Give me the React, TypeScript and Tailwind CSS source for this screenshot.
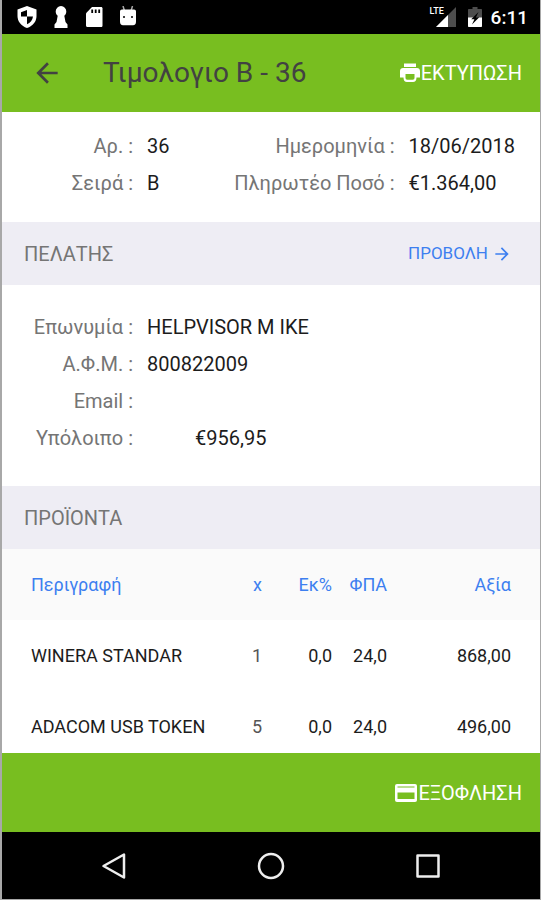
import { MdArrowBack, MdArrowForward } from "react-icons/md";

const products = [
  { name: "WINERA STANDAR", qty: "1", discount: "0,0", vat: "24,0", total: "868,00" },
  { name: "ADACOM USB TOKEN", qty: "5", discount: "0,0", vat: "24,0", total: "496,00" },
];

function PrintIcon() {
  return (
    <svg viewBox="0 0 20 20" className="size-5">
      <path d="M4 .5h12v3.500H4Z" fill="#fff" />
      <path d="M3 5h14c1.700 0 3 1.300 3 3v6.500h-3.500c0 3-1.300 4.500-3.500 4.500H7c-2.200 0-3.500-1.500-3.500-4.500H0V8c0-1.700 1.300-3 3-3Z" fill="#fff" />
      <path d="M5.500 11h9v3.500c0 1.500-.5 2.200-1.800 2.200H7.300c-1.300 0-1.800-.7-1.800-2.200Z" fill="#78be20" />
    </svg>
  );
}

function CardIcon() {
  return (
    <svg viewBox="0 0 22 18" className="h-[18px] w-[22px]">
      <rect width="22" height="18" rx="2" fill="#fff" />
      <path d="M2.500 2.500h17v1h-17ZM2.500 8.500h17v6.500h-17Z" fill="#78be20" />
    </svg>
  );
}

function StatusBar() {
  return (
    <div className="flex h-[34px] shrink-0 items-center justify-between bg-black pl-[15px] pr-3 text-white">
      <div className="flex items-center gap-[14px]">
        <svg viewBox="0 0 20 22" className="h-[22px] w-5">
          <path d="M10 0 19.500 3.600V10c0 5.500-3.600 10-9.500 12C4.200 20 .5 15.500.5 10V3.600Z" fill="#fff" />
          <path d="M10 4v6.500H4V6.300ZM10 10.500h6c-.4 3.800-2.700 6.400-6 7.800Z" fill="#000" />
        </svg>
        <svg viewBox="0 0 20 22" className="h-[22px] w-5">
          <path
            d="M10 0a5.500 5.500 0 0 1 5.300 5.600c0 1.900-.8 3.300-2 4.200l1.200 6.200 2 2.500V22h-13v-3.500l2-2.500 1.200-6.200c-1.200-.9-2-2.300-2-4.200A5.500 5.500 0 0 1 10 0Z"
            fill="#fff"
          />
        </svg>
        <svg viewBox="0 0 20 22" className="h-[22px] w-5">
          <path d="M7 1h9c1 0 1.500.6 1.500 1.500v17c0 1-.6 1.500-1.500 1.500H2.500C1.500 21 1 20.400 1 19.500V7.200Z" fill="#fff" />
          <path d="M7.200 3.500v3.500M10.700 3.500v3.500M14.200 3.500v3.500" stroke="#000" strokeWidth="1.800" />
        </svg>
        <svg viewBox="0 0 20 22" className="h-[22px] w-5">
          <path d="M4 0 5.500 5M13.500 0 12 5" stroke="#aaa" strokeWidth="1.500" />
          <path d="M3 3.500h12c1.200 0 2 .8 2 2v10c0 2.500-1 3.700-3 3.700H4c-2 0-3-1.200-3-3.700v-10c0-1.200.8-2 2-2Z" fill="#fff" />
          <circle cx="5" cy="11" r="1" fill="#000" />
          <circle cx="13" cy="11" r="1" fill="#000" />
        </svg>
      </div>

      <div className="flex items-center">
        <div className="relative h-5 w-[26px]">
          <svg viewBox="0 0 26 20" className="h-5 w-[26px]">
            <path d="M26 0v20H6Z" fill="#4d4d4d" />
            <path d="M18 8v12H6Z" fill="#fff" />
          </svg>
          <span className="absolute top-0 left-0 text-[9px] leading-[9px] font-medium">LTE</span>
        </div>
        <svg viewBox="0 0 14 20" className="ml-3 h-5 w-[14px]">
          <path d="M4.500 0h5v2H13c.6 0 1 .4 1 1v8H0V3c0-.6.400-1 1-1h3.500Z" fill="#4d4d4d" />
          <path d="M0 10.500h14V19c0 .6-.4 1-1 1H1c-.6 0-1-.4-1-1Z" fill="#fff" />
          <path d="M10.500 5 3.200 12.300h3.200L4 17.500l7.300-7.200H8Z" fill="#000" />
        </svg>
        <span className="ml-[9px] text-[19px] leading-none font-medium">6:11</span>
      </div>
    </div>
  );
}

function SystemNav() {
  return (
    <nav className="flex h-[67px] shrink-0 items-center justify-center bg-black">
      <button aria-label="Πίσω" className="flex h-full w-[157px] items-center justify-center">
        <svg viewBox="0 0 28 28" className="size-7" fill="none" stroke="#eee" strokeWidth="2.500" strokeLinejoin="round">
          <path d="M24 2.500v23L3.500 14Z" />
        </svg>
      </button>
      <button aria-label="Αρχική" className="flex h-full w-[157px] items-center justify-center">
        <svg viewBox="0 0 28 28" className="size-7" fill="none" stroke="#eee" strokeWidth="2.500">
          <circle cx="14" cy="14" r="12" />
        </svg>
      </button>
      <button aria-label="Εφαρμογές" className="flex h-full w-[157px] items-center justify-center">
        <svg viewBox="0 0 28 28" className="size-7" fill="none" stroke="#eee" strokeWidth="2.500" strokeLinejoin="round">
          <path d="M3.500 3.500h21v21h-21Z" />
        </svg>
      </button>
    </nav>
  );
}

function App() {
  return (
    <div className="flex h-screen flex-col border-r border-b border-l-2 border-[#a8a8a8] bg-white font-['Roboto',sans-serif] text-[20px] text-[#1c1c1c]">
      <StatusBar />

      <header className="flex h-[78px] shrink-0 items-center bg-[#78be20] pr-[18px] pl-[29px]">
        <button aria-label="Επιστροφή" className="text-[#424242]">
          <MdArrowBack className="size-8" />
        </button>
        <h1 className="ml-10 flex-1 text-[28px] text-[#424242]">Τιμολογιο Β - 36</h1>
        <button className="flex items-center gap-px text-white">
          <PrintIcon />
          ΕΚΤΥΠΩΣΗ
        </button>
      </header>

      <main className="min-h-0 flex-1 overflow-y-auto [scrollbar-width:none]">
        <section className="flex justify-between pt-4 pr-[25px] pb-5 leading-[37px]">
          <dl className="grid grid-cols-[131px_auto] gap-x-[14px]">
            <dt className="text-right text-[#757575]">Αρ. :</dt>
            <dd>36</dd>
            <dt className="text-right text-[#757575]">Σειρά :</dt>
            <dd>B</dd>
          </dl>
          <dl className="grid grid-cols-[auto_auto] gap-x-[14px]">
            <dt className="text-right text-[#757575]">Ημερομηνία :</dt>
            <dd>18/06/2018</dd>
            <dt className="text-right text-[#757575]">Πληρωτέο Ποσό :</dt>
            <dd>€1.364,00</dd>
          </dl>
        </section>

        <div className="flex h-[63px] items-center justify-between bg-[#eeedf4] pr-[28px] pl-[22px]">
          <h2 className="text-[#757575]">ΠΕΛΑΤΗΣ</h2>
          <a href="#customer" className="flex items-center gap-1 text-[17px] text-[#3d7ff0]">
            ΠΡΟΒΟΛΗ
            <MdArrowForward className="size-5" />
          </a>
        </div>

        <section className="pt-6 pb-[29px] leading-[37px]">
          <dl className="grid grid-cols-[131px_1fr] gap-x-[14px]">
            <dt className="text-right text-[#757575]">Επωνυμία :</dt>
            <dd>HELPVISOR M IKE</dd>
            <dt className="text-right text-[#757575]">Α.Φ.Μ. :</dt>
            <dd>800822009</dd>
            <dt className="text-right text-[#757575]">Email :</dt>
            <dd></dd>
            <dt className="text-right text-[#757575]">Υπόλοιπο :</dt>
            <dd className="pl-12">€956,95</dd>
          </dl>
        </section>

        <div className="flex h-[63px] items-center bg-[#eeedf4] pl-[22px]">
          <h2 className="text-[#757575]">ΠΡΟΪΟΝΤΑ</h2>
        </div>

        <table className="w-full table-fixed text-right text-[18px]">
          <thead className="bg-[#fafafa] text-[#3d7ff0]">
            <tr className="h-[71px]">
              <th className="pl-[29px] text-left font-normal">Περιγραφή</th>
              <th className="w-8 font-normal">x</th>
              <th className="w-[70px] font-normal">Εκ%</th>
              <th className="w-[55px] font-normal">ΦΠΑ</th>
              <th className="w-[153px] pr-[29px] font-normal">Αξία</th>
            </tr>
          </thead>
          <tbody>
            {products.map((product) => (
              <tr key={product.name} className="h-[71px]">
                <td className="pl-[29px] text-left">{product.name}</td>
                <td className="text-[#555]">{product.qty}</td>
                <td>{product.discount}</td>
                <td>{product.vat}</td>
                <td className="pr-[29px]">{product.total}</td>
              </tr>
            ))}
          </tbody>
        </table>
      </main>

      <footer className="flex h-[79px] shrink-0 items-center justify-end bg-[#78be20] pr-[18px]">
        <button className="flex items-center gap-px text-white">
          <CardIcon />
          ΕΞΟΦΛΗΣΗ
        </button>
      </footer>

      <SystemNav />
    </div>
  );
}

export default App;
